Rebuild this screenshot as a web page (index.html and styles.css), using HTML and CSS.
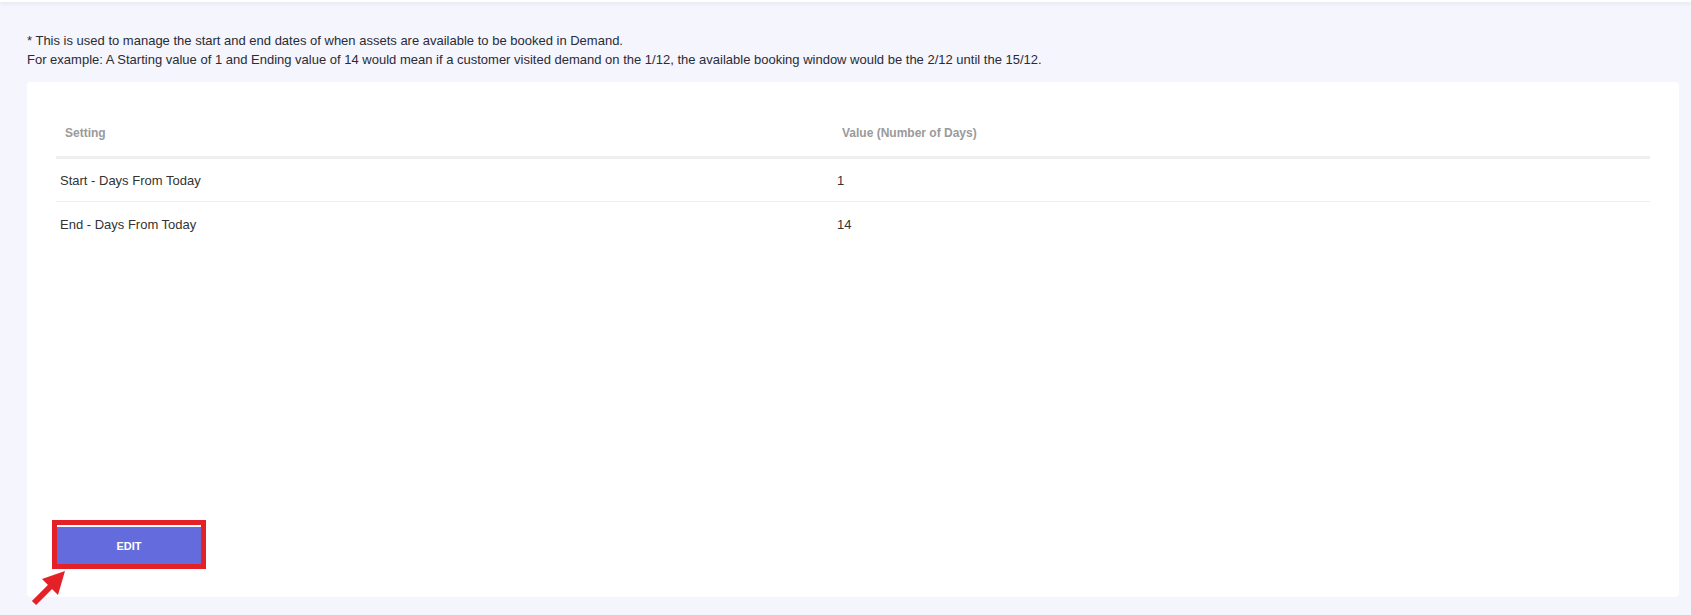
FILE: index.html
```html
<!DOCTYPE html>
<html lang="en">
<head>
  <meta charset="UTF-8" />
  <meta name="viewport" content="width=device-width, initial-scale=1.0"/>
  <title>Booking Window Settings</title>
  <link rel="stylesheet" href="styles.css">
</head>
<body>
  <div class="top-bar"></div>

  <div class="page">
    <div class="intro">
      <p>* This is used to manage the start and end dates of when assets are available to be booked in Demand.</p>
      <p>For example: A Starting value of 1 and Ending value of 14 would mean if a customer visited demand on the 1/12, the available booking window would be the 2/12 until the 15/12.</p>
    </div>

    <div class="card">
      <table class="settings-table">
        <thead>
          <tr>
            <th class="col-setting">Setting</th>
            <th>Value (Number of Days)</th>
          </tr>
        </thead>
        <tbody>
          <tr>
            <td>Start - Days From Today</td>
            <td>1</td>
          </tr>
          <tr>
            <td>End - Days From Today</td>
            <td>14</td>
          </tr>
        </tbody>
      </table>

      <div class="card-footer">
        <div class="highlight">
          <button class="btn">EDIT</button>
          <span class="highlight-box"></span>
          <svg class="highlight-arrow" width="40" height="40" viewBox="0 0 40 40">
            <line x1="3" y1="36" x2="22" y2="17" stroke="#e42127" stroke-width="6"/>
            <polygon points="34,4 11,12 27,28" fill="#e42127"/>
          </svg>
        </div>
      </div>
    </div>
  </div>
</body>
</html>
```

FILE: styles.css
```css
* {
  margin: 0;
  padding: 0;
  box-sizing: border-box;
}

body {
  font-family: 'Liberation Sans', Arial, sans-serif;
  font-size: 13px;
  color: #333;
  background: #f4f5fd;
  min-height: 100vh;
}

.top-bar {
  height: 2px;
  background: #fff;
  box-shadow: 0 1px 4px rgba(0, 0, 0, 0.12);
}

.page {
  padding: 29px 12px 18px 27px;
}

.intro {
  line-height: 19px;
  color: #2b2b35;
  margin-bottom: 13px;
}

.card {
  background: white;
  border-radius: 4px;
  height: 515px;
  padding: 29px 29px 33px;
  display: flex;
  flex-direction: column;
}

.settings-table {
  width: 100%;
  border-collapse: collapse;
}

.settings-table th {
  text-align: left;
  font-size: 12px;
  font-weight: bold;
  color: #9a9a9a;
  height: 46px;
  padding: 0 9px;
  border-bottom: 3px solid #efefef;
}

.settings-table th.col-setting {
  width: 777px;
}

.settings-table td {
  height: 44px;
  padding: 2px 4px 0;
  color: #333;
  border-bottom: 1px solid #efefef;
}

.settings-table tbody tr:last-child td {
  border-bottom: none;
}

.card-footer {
  margin-top: auto;
  padding-left: 1px;
}

.highlight {
  position: relative;
  display: inline-block;
}

.btn {
  display: block;
  width: 144px;
  height: 37px;
  background: #636bdd;
  color: white;
  border: none;
  font-family: inherit;
  font-size: 11px;
  font-weight: bold;
  cursor: pointer;
}

.highlight-box {
  position: absolute;
  top: -7px;
  left: -5px;
  right: -5px;
  bottom: -5px;
  border: 5px solid #e42127;
}

.highlight-arrow {
  position: absolute;
  left: -26px;
  top: 40px;
}
```
